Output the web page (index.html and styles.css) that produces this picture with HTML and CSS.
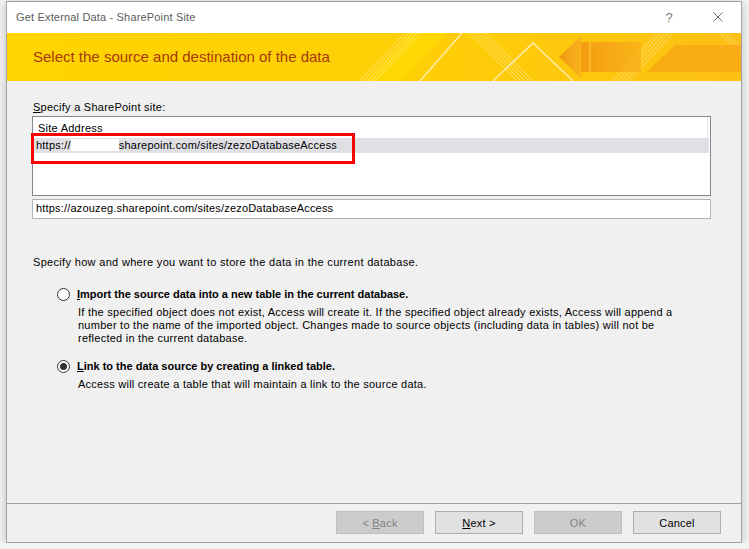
FILE: index.html
```html
<!DOCTYPE html>
<html lang="en">
  <head>
    <meta charset="UTF-8" />
    <title>Get External Data - SharePoint Site</title>
    <link rel="stylesheet" href="styles.css">
  </head>
  <body>
    <div class="Dialog">
      <div class="TitleBar">
        <span class="TitleText">Get External Data - SharePoint Site</span>
        <span class="Help">?</span>
        <svg class="Close" width="10" height="10" viewBox="0 0 10 10">
          <path d="M0.5 0.5 L9.5 9.5 M9.5 0.5 L0.5 9.5" stroke="#6e6e6e" stroke-width="1" fill="none"/>
        </svg>
      </div>

      <div class="Banner">
        <svg class="BannerArt" width="734" height="48" viewBox="0 0 734 48" preserveAspectRatio="none">
          <defs>
            <linearGradient id="base" x1="0" y1="0" x2="1" y2="0">
              <stop offset="0" stop-color="#ffd400"/>
              <stop offset="0.55" stop-color="#ffcf06"/>
              <stop offset="1" stop-color="#fcc014"/>
            </linearGradient>
            <linearGradient id="arrow" x1="0" y1="0" x2="1" y2="0">
              <stop offset="0" stop-color="#f29611"/>
              <stop offset="1" stop-color="#f9b31c"/>
            </linearGradient>
          </defs>
          <rect width="734" height="48" fill="url(#base)"/>
          <polygon points="360,48 395,48 440,0 405,0" fill="#ffe000" opacity="0.5"/>
          <g stroke="#fff" stroke-width="1" opacity="0.4">
            <line x1="352" y1="48" x2="398" y2="0"/>
            <line x1="356" y1="48" x2="402" y2="0"/>
            <line x1="360" y1="48" x2="406" y2="0"/>
            <line x1="364" y1="48" x2="410" y2="0"/>
            <line x1="368" y1="48" x2="414" y2="0"/>
            <line x1="463" y1="0" x2="510" y2="48"/>
            <line x1="467" y1="0" x2="514" y2="48"/>
            <line x1="471" y1="0" x2="518" y2="48"/>
            <line x1="475" y1="0" x2="522" y2="48"/>
            <line x1="479" y1="0" x2="526" y2="48"/>
            <line x1="606" y1="48" x2="650" y2="0"/>
            <line x1="610" y1="48" x2="654" y2="0"/>
            <line x1="614" y1="48" x2="658" y2="0"/>
            <line x1="618" y1="48" x2="662" y2="0"/>
            <line x1="622" y1="48" x2="666" y2="0"/>
            <line x1="713" y1="0" x2="734" y2="22"/>
            <line x1="717" y1="0" x2="734" y2="18"/>
            <line x1="721" y1="0" x2="734" y2="14"/>
          </g>
          <polygon points="640,39 734,39 734,12 668,12" fill="#f7a514" opacity="0.8"/>
          <polygon points="552,24 574,3 574,45" fill="url(#arrow)"/>
          <rect x="574" y="9" width="60" height="30" fill="url(#arrow)" opacity="0.85"/>
          <line x1="583" y1="9" x2="583" y2="39" stroke="#ffd24a" stroke-width="1"/>
          <g stroke="#fff" fill="none" opacity="0.7" stroke-width="1.3">
            <line x1="413" y1="48" x2="455" y2="0"/>
            <polyline points="486,48 526,10 566,48"/>
          </g>
        </svg>
        <h1 class="BannerTitle">Select the source and destination of the data</h1>
      </div>

      <div class="Content">
        <div class="Label"><u>S</u>pecify a SharePoint site:</div>
        <div class="ListBox">
          <div class="ListHeader">Site Address</div>
          <div class="ListRow">https://<span class="Hidden"></span>sharepoint.com/sites/zezoDatabaseAccess</div>
          <div class="Marker"></div>
        </div>
        <div class="TextBox">https://azouzeg.sharepoint.com/sites/zezoDatabaseAccess</div>

        <p class="Intro">Specify how and where you want to store the data in the current database.</p>

        <div class="Option">
          <span class="Radio"></span>
          <span class="OptionLabel"><u>I</u>mport the source data into a new table in the current database.</span>
        </div>
        <p class="OptionText">If the specified object does not exist, Access will create it. If the specified object already exists, Access will append a<br>number to the name of the imported object. Changes made to source objects (including data in tables) will not be<br>reflected in the current database.</p>

        <div class="Option Second">
          <span class="Radio Checked"></span>
          <span class="OptionLabel"><u>L</u>ink to the data source by creating a linked table.</span>
        </div>
        <p class="OptionText">Access will create a table that will maintain a link to the source data.</p>
      </div>

      <div class="Footer">
        <button class="Button" disabled>&lt; <u>B</u>ack</button>
        <button class="Button"><u>N</u>ext &gt;</button>
        <button class="Button" disabled>OK</button>
        <button class="Button">Cancel</button>
      </div>
    </div>
  </body>
</html>
```

FILE: styles.css
```css
* {
  box-sizing: border-box;
}
body {
  margin: 0;
  padding: 1px 0 0 6px;
  background-color: #f3f3f3;
  font-family: "Liberation Sans", Arial, sans-serif;
  font-size: 11px;
  line-height: 13px;
  letter-spacing: 0.25px;
  color: #000;
}
.Dialog {
  width: 736px;
  height: 542px;
  border: 1px solid #a3a3a3;
  background-color: #f0f0f0;
  display: flex;
  flex-direction: column;
  box-shadow: 0 2px 9px rgba(0, 0, 0, 0.22);
}
.TitleBar {
  height: 31px;
  background-color: #fff;
  display: flex;
  align-items: center;
  padding: 0 18px 1px 9px;
}
.TitleText {
  color: #5c5c5c;
  flex: 1;
  padding-top: 1px;
  letter-spacing: 0.17px;
}
.Help {
  color: #7a7a7a;
  font-size: 13px;
  margin-right: 40px;
}
.Close {
  display: block;
}
.Banner {
  position: relative;
  height: 48px;
  overflow: hidden;
}
.BannerArt {
  position: absolute;
  top: 0;
  left: 0;
}
.BannerTitle {
  position: relative;
  margin: 0;
  padding-left: 26px;
  font-size: 15px;
  font-weight: normal;
  letter-spacing: 0;
  line-height: 48px;
  color: #a53a0a;
}
.Content {
  flex: 1;
  padding: 20px 30px 0 26px;
}
.Label {
  margin-bottom: 2px;
}
.ListBox {
  position: relative;
  margin-left: -1px;
  height: 80px;
  border: 1px solid #828790;
  background-color: #fff;
}
.ListHeader {
  height: 21px;
  padding: 5px 0 0 5px;
  margin-right: 2px;
  border-right: 1px solid #e3e3e3;
}
.ListRow {
  height: 15px;
  padding: 1px 0 0 3px;
  margin-right: 1px;
  background-color: #dfdfe4;
  line-height: 13px;
  letter-spacing: 0.22px;
}
.Hidden {
  display: inline-block;
  width: 48px;
  height: 12px;
  vertical-align: -2px;
  background-color: #fff;
}
.Marker {
  position: absolute;
  left: -2px;
  top: 16px;
  width: 324px;
  height: 31px;
  border: 3px solid #ff0000;
}
.TextBox {
  margin: 3px 0 0 -1px;
  height: 20px;
  border: 1px solid #b1b3b8;
  background-color: #fff;
  padding: 2px 0 0 3px;
  letter-spacing: 0.18px;
}
.Intro {
  margin: 37px 0 0 0;
  letter-spacing: 0.32px;
}
.Option {
  display: flex;
  align-items: center;
  margin-top: 19px;
  padding-left: 24px;
}
.Option.Second {
  margin-top: 15px;
}
.Radio {
  width: 13px;
  height: 13px;
  border: 1px solid #333;
  border-radius: 50%;
  background-color: #fff;
  margin-right: 7px;
  display: flex;
  align-items: center;
  justify-content: center;
}
.Checked::after {
  content: "";
  width: 7px;
  height: 7px;
  border-radius: 50%;
  background-color: #333;
}
.OptionLabel {
  font-weight: bold;
  letter-spacing: 0;
}
.OptionText {
  margin: 5px 0 0 45px;
  white-space: nowrap;
}
.Footer {
  border-top: 1px solid #a0a0a0;
  height: 39px;
  display: flex;
  justify-content: flex-end;
  align-items: flex-start;
  gap: 11px;
  padding: 7px 20px 0 0;
}
.Button {
  width: 88px;
  height: 23px;
  border: 1px solid #adadad;
  background-color: #e1e1e1;
  font-family: inherit;
  font-size: 11px;
  letter-spacing: 0.2px;
  color: #000;
  padding: 0;
}
.Button:disabled {
  background-color: #cccccc;
  border-color: #bfbfbf;
  color: #838383;
}
```
